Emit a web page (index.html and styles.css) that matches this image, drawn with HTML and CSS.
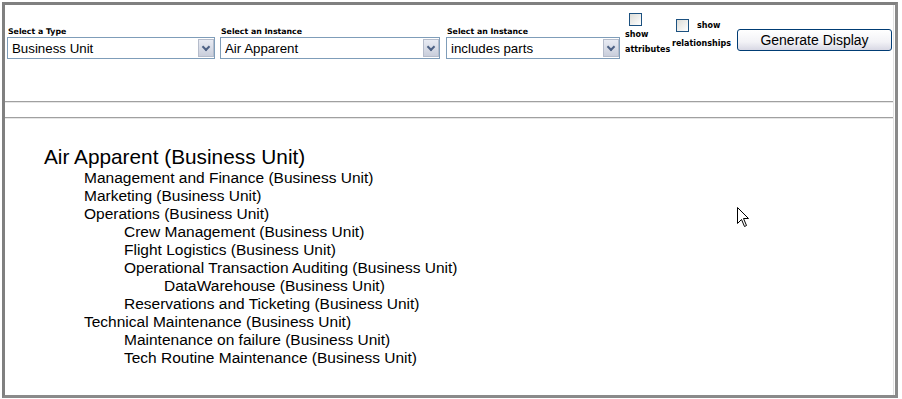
FILE: index.html
```html
<!DOCTYPE html>
<html lang="en">
<head>
  <meta charset="UTF-8">
  <title>Display Generator</title>
  <link rel="stylesheet" href="styles.css">
</head>
<body>
  <div class="frame">
    <div class="inner">
      <!-- Auswahl oben -->
      <div class="toolbar">
        <div class="field f-type">
          <label>Select a Type</label>
          <div class="select-wrap">
            <select><option>Business Unit</option></select>
            <span class="drop"></span>
          </div>
        </div>
        <div class="field f-instance">
          <label>Select an Instance</label>
          <div class="select-wrap">
            <select><option>Air Apparent</option></select>
            <span class="drop"></span>
          </div>
        </div>
        <div class="field f-relation">
          <label>Select an Instance</label>
          <div class="select-wrap">
            <select><option>includes parts</option></select>
            <span class="drop"></span>
          </div>
        </div>
        <div class="check check-attr">
          <input type="checkbox">
          <div class="check-text">show</div>
          <div class="check-text">attributes</div>
        </div>
        <div class="check check-rel">
          <div class="check-row">
            <input type="checkbox">
            <span class="check-text">show</span>
          </div>
          <div class="check-text rel-label">relationships</div>
        </div>
        <button class="btn-generate">Generate Display</button>
      </div>

      <div class="sep"></div>
      <div class="sep second"></div>

      <!-- Ergebnisbaum -->
      <div class="tree">
        <div class="root">Air Apparent (Business Unit)</div>
        <ul>
          <li>Management and Finance (Business Unit)</li>
          <li>Marketing (Business Unit)</li>
          <li>Operations (Business Unit)
            <ul>
              <li>Crew Management (Business Unit)</li>
              <li>Flight Logistics (Business Unit)</li>
              <li>Operational Transaction Auditing (Business Unit)
                <ul>
                  <li>DataWarehouse (Business Unit)</li>
                </ul>
              </li>
              <li>Reservations and Ticketing (Business Unit)</li>
            </ul>
          </li>
          <li>Technical Maintenance (Business Unit)
            <ul>
              <li>Maintenance on failure (Business Unit)</li>
              <li>Tech Routine Maintenance (Business Unit)</li>
            </ul>
          </li>
        </ul>
      </div>
    </div>
  </div>

  <svg class="cursor" width="13" height="21" viewBox="0 0 13 21">
    <path d="M0.5 0.5 L0.5 16.5 L4.5 12.5 L7.5 19.5 L9.5 18.5 L6.5 11.5 L11.5 11.5 Z" fill="#fff" stroke="#000" stroke-width="1"/>
  </svg>
</body>
</html>
```

FILE: styles.css
```css
/* Basis */
* { box-sizing: border-box; }
body {
  margin: 0;
  background: #fff;
  font-family: "Liberation Sans", Arial, sans-serif;
  color: #000;
  position: relative;
  width: 902px;
  height: 399px;
  overflow: hidden;
}
.frame {
  margin: 2px;
  width: 896px;
  height: 396px;
  border: 3px solid #808080;
  border-right-color: #8a8a8a;
  border-bottom-color: #8a8a8a;
}
.inner {
  height: 100%;
  margin-right: 1px;
  border-right: 1px solid #e2e2e2;
}

/* Auswahlleiste */
.toolbar {
  display: flex;
  align-items: flex-start;
  height: 96px;
  padding-left: 2px;
}
.field { margin-top: 22px; }
.field label {
  display: block;
  height: 10px;
  line-height: 10px;
  padding-left: 1px;
  font-family: "DejaVu Sans", Verdana, sans-serif;
  font-weight: bold;
  font-size: 7.8px;
  color: #000;
}
.f-type { width: 208px; }
.f-instance { width: 220px; margin-left: 5px; }
.f-relation { width: 174px; margin-left: 6px; }
.select-wrap { position: relative; height: 22px; }
.select-wrap select {
  -webkit-appearance: none;
  appearance: none;
  width: 100%;
  height: 22px;
  margin: 0;
  padding: 0 0 0 4px;
  border: 1px solid #7f9db9;
  border-radius: 0;
  background: #fff;
  font-family: "Liberation Sans", Arial, sans-serif;
  font-size: 13.3px;
  color: #000;
}
.drop {
  position: absolute;
  top: 2px;
  right: 1px;
  width: 16px;
  height: 18px;
  border: 1px solid #b5bccb;
  background: linear-gradient(#e8ebf3, #c9cedb);
}
.drop::after {
  content: "";
  position: absolute;
  left: 4px;
  top: 4px;
  width: 4px;
  height: 4px;
  border-right: 2px solid #4d6185;
  border-bottom: 2px solid #4d6185;
  transform: rotate(45deg);
}

/* Checkboxen */
.check {
  font-family: "DejaVu Sans", Verdana, sans-serif;
  font-weight: bold;
  font-size: 8px;
}
.check input {
  -webkit-appearance: none;
  appearance: none;
  display: block;
  width: 13px;
  height: 13px;
  margin: 0;
  border: 1px solid #1c5180;
  border-radius: 0;
  background: linear-gradient(135deg, #dcdcd7, #fff);
}
.check-text { line-height: 15px; white-space: nowrap; }
.check-attr { width: 44px; margin-left: 5px; }
.check-attr input { margin: 8px 0 1px 4px; }
.check-rel { width: 62px; margin-left: 3px; }
.check-row {
  display: flex;
  align-items: center;
  margin-top: 13px;
  padding-left: 4px;
}
.check-row .check-text { margin-left: 8px; }
.rel-label { margin-top: 3px; }

.btn-generate {
  width: 155px;
  height: 22px;
  margin: 24px 0 0 3px;
  padding: 0;
  border: 1px solid #003c74;
  border-radius: 3px;
  background: linear-gradient(#fff, #f2f2f6 60%, #d8d8e4);
  font-family: "Liberation Sans", Arial, sans-serif;
  font-size: 14px;
  color: #000;
}

/* Trennlinien */
.sep {
  height: 2px;
  border-top: 1px solid #a0a0a0;
  border-bottom: 1px solid #e6e6e6;
}
.sep.second { margin-top: 14px; }

/* Baum */
.tree {
  padding: 26px 0 0 39px;
}
.root {
  font-size: 20.8px;
  line-height: 24px;
}
.tree ul {
  list-style: none;
  margin: 0;
  padding: 0 0 0 40px;
  font-size: 15.5px;
  line-height: 18px;
}

.cursor {
  position: absolute;
  left: 737px;
  top: 207px;
}
```
